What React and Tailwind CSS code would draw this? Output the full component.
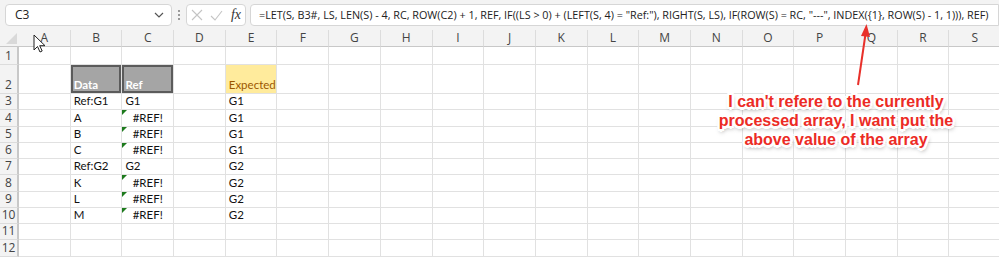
import React from "react";

const COLS = ["A", "B", "C", "D", "E", "F", "G", "H", "I", "J", "K", "L", "M", "N", "O", "P", "Q", "R", "S"];

const FORMULA =
  '=LET(S, B3#, LS, LEN(S) - 4, RC, ROW(C2) + 1, REF, IF((LS > 0) + (LEFT(S, 4) = "Ref:"), RIGHT(S, LS), IF(ROW(S) = RC, "---", INDEX({1}, ROW(S) - 1, 1))), REF)';

const DATA = {
  B2: "Data", C2: "Ref", E2: "Expected",
  B3: "Ref:G1", C3: "G1", E3: "G1",
  B4: "A", C4: "#REF!", E4: "G1",
  B5: "B", C5: "#REF!", E5: "G1",
  B6: "C", C6: "#REF!", E6: "G1",
  B7: "Ref:G2", C7: "G2", E7: "G2",
  B8: "K", C8: "#REF!", E8: "G2",
  B9: "L", C9: "#REF!", E9: "G2",
  B10: "M", C10: "#REF!", E10: "G2",
};

const Cell = ({ id }) => {
  const v = DATA[id];
  const isHead = id === "B2" || id === "C2";
  const isExpected = id === "E2";
  const isErr = v === "#REF!";
  return (
    <div
      className={`relative flex items-end border-r border-b border-[#e1e1e1] overflow-visible whitespace-nowrap text-[11.5px] leading-[15px] pb-px font-[Lato,sans-serif] ${
        isHead
          ? "bg-[#a5a5a5] shadow-[inset_0_0_0_2px_#5b5b5b] text-white font-bold pl-[3px]"
          : isExpected
          ? "bg-[#ffeb9c] text-[#9c5700] pl-[3px]"
          : isErr
          ? "justify-center text-[#111]"
          : "text-[#111] pl-[3px]"
      }`}
    >
      {isErr && (
        <span className="absolute left-0 top-0 w-0 h-0 border-t-[5px] border-r-[5px] border-t-[#1d7a1d] border-r-transparent" />
      )}
      {v}
    </div>
  );
};

export default function App() {
  const rows = Array.from({ length: 12 }, (_, i) => i + 1);
  return (
    <div
      className="relative w-[999px] h-[260px] overflow-hidden bg-white"
      style={{ fontFamily: "'Liberation Sans', Arial, sans-serif" }}
    >
      {/* formula bar */}
      <div className="h-[30px] bg-[#f3f3f3] flex items-center pl-[5px] gap-[4px] font-['Open_Sans',sans-serif]">
        <div className="w-[167px] h-[22px] bg-white border border-[#d6d6d6] rounded-[4px] flex items-center justify-between pl-[9px] pr-[7px] text-[12px] text-[#222]">
          <span>C3</span>
          <svg width="10" height="6" viewBox="0 0 10 6">
            <path d="M1 1l4 4 4-4" fill="none" stroke="#555" strokeWidth="1.2" />
          </svg>
        </div>
        <div className="flex flex-col gap-[2px] px-[2px]">
          <span className="w-[2px] h-[2px] bg-[#9a9a9a]" />
          <span className="w-[2px] h-[2px] bg-[#9a9a9a]" />
          <span className="w-[2px] h-[2px] bg-[#9a9a9a]" />
        </div>
        <div className="w-[60px] h-[22px] bg-white border border-[#d6d6d6] rounded-[4px] flex items-center justify-between pl-[4px] pr-[4px]">
          <svg width="12" height="12" viewBox="0 0 12 12">
            <path d="M1 1l10 10M11 1L1 11" stroke="#c4c4c4" strokeWidth="1.1" />
          </svg>
          <svg width="13" height="11" viewBox="0 0 13 11">
            <path d="M1 6l4 4 7-9" fill="none" stroke="#c4c4c4" strokeWidth="1.1" />
          </svg>
          <span className="font-['Liberation_Serif',serif] italic text-[14px] text-[#333] leading-none">
            fx
          </span>
        </div>
        <div className="flex-1 h-[22px] bg-white border border-[#d6d6d6] rounded-l-[4px] flex items-center pl-[8px] text-[10.8px] text-[#222] whitespace-nowrap overflow-hidden">
          {FORMULA}
        </div>
      </div>

      {/* sheet */}
      <div className="grid grid-cols-[19px_repeat(19,51.7px)] grid-rows-[17px_18px_29px_repeat(11,16.25px)]">
        <div className="bg-[#f3f3f3] border-b border-[#c8c8c8] flex items-end justify-end pr-[2px] pb-[2px]">
          <svg width="11" height="11" viewBox="0 0 11 11">
            <path d="M11 0V11H0z" fill="#d9d9d9" />
          </svg>
        </div>
        {COLS.map((c) => (
          <div
            key={c}
            className="bg-[#f3f3f3] border-b border-[#c8c8c8] border-r border-r-[#dcdcdc] flex items-center justify-center text-[12px] text-[#444] font-['Open_Sans',sans-serif]"
          >
            {c}
          </div>
        ))}
        {rows.map((r) => (
          <React.Fragment key={r}>
            <div className="bg-[#f3f3f3] border-r-2 border-r-[#c8c8c8] border-b border-b-[#dcdcdc] flex items-end justify-center pb-[1px] text-[12px] leading-[14px] text-[#444] font-['Open_Sans',sans-serif]">
              {r}
            </div>
            {COLS.map((c) => (
              <Cell key={c + r} id={c + r} />
            ))}
          </React.Fragment>
        ))}
      </div>

      {/* mouse cursor */}
      <svg className="absolute left-[33px] top-[34px]" width="14" height="20" viewBox="0 0 14 20">
        <path
          d="M1 1v15l3.5-3.5 2.5 5.5 2.2-1-2.5-5.3H12z"
          fill="#fff"
          stroke="#222"
          strokeWidth="1"
          strokeLinejoin="round"
        />
      </svg>

      {/* arrow */}
      <svg className="absolute left-0 top-0 pointer-events-none" width="999" height="260">
        <line x1="858" y1="85" x2="865.5" y2="34" stroke="#e8302a" strokeWidth="2" />
        <polygon points="866.5,24 861,36 870,37" fill="#e8302a" />
      </svg>

      {/* annotation */}
      <div className="absolute left-[676px] top-[92px] w-[320px] text-center text-[16px] leading-[19px] font-bold text-[#ec2b25] [text-shadow:-2px_-2px_0_#fff,2px_-2px_0_#fff,-2px_2px_0_#fff,2px_2px_0_#fff,0_2.5px_0_#fff,0_-2.5px_0_#fff,2.5px_0_0_#fff,-2.5px_0_0_#fff,1px_3px_4px_rgba(0,0,0,0.5)]">
        I can't refere to the currently
        <br />
        processed array, I want put the
        <br />
        above value of the array
      </div>
    </div>
  );
}
